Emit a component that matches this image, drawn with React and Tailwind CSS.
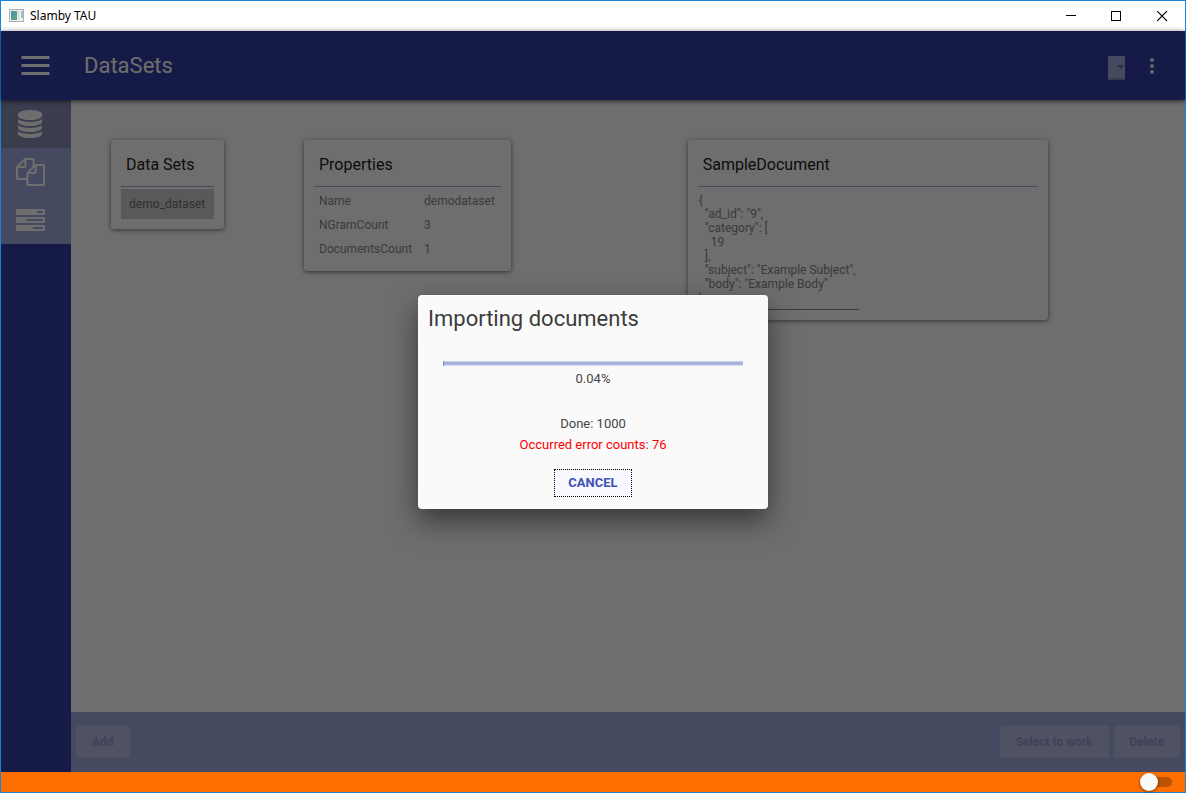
import React from "react";

const NAV = [
  {
    label: "DataSets",
    active: true,
    box: "0 0 1536 1792",
    size: "ml-[2px] w-[24px]",
    d: "M768 768q237 0 443-43t325-127v170q0 69-103 128t-280 93.5-385 34.5-385-34.5-280-93.5-103-128v-170q119 84 325 127t443 43zm0 768q237 0 443-43t325-127v170q0 69-103 128t-280 93.5-385 34.5-385-34.5-280-93.5-103-128v-170q119 84 325 127t443 43zm0-384q237 0 443-43t325-127v170q0 69-103 128t-280 93.5-385 34.5-385-34.5-280-93.5-103-128v-170q119 84 325 127t443 43zm0-1152q208 0 385 34.5t280 93.5 103 128v128q0 69-103 128t-280 93.5-385 34.5-385-34.5-280-93.5-103-128v-128q0-69 103-128t280-93.5 385-34.5z",
  },
  {
    label: "Documents",
    box: "0 0 1792 1792",
    size: "w-[29px]",
    d: "M1696 384q40 0 68 28t28 68v1216q0 40-28 68t-68 28h-960q-40 0-68-28t-28-68v-288h-544q-40 0-68-28t-28-68v-672q0-40 20-88t48-76l408-408q28-28 76-48t88-20h416q40 0 68 28t28 68v328q68-40 128-40h416zm-544 213l-299 299h299v-299zm-640-384l-299 299h299v-299zm196 647l316-316v-416h-384v416q0 40-28 68t-68 28h-416v640h512v-256q0-40 20-88t48-76zm956 804v-1152h-384v416q0 40-28 68t-68 28h-416v640h896z",
  },
  {
    label: "Processes",
    box: "0 -64 1792 1792",
    size: "w-[29px]",
    d: "M1024 1408h640v-128h-640v128zm-384-512h1024v-128h-1024v128zm640-512h384v-128h-384v128zm512 832v256q0 26-19 45t-45 19h-1664q-26 0-45-19t-19-45v-256q0-26 19-45t45-19h1664q26 0 45 19t19 45zm0-512v256q0 26-19 45t-45 19h-1664q-26 0-45-19t-19-45v-256q0-26 19-45t45-19h1664q26 0 45 19t19 45zm0-512v256q0 26-19 45t-45 19h-1664q-26 0-45-19t-19-45v-256q0-26 19-45t45-19h1664q26 0 45 19t19 45z",
  },
];

const PROPERTIES = [
  ["Name", "demodataset"],
  ["NGramCount", "3"],
  ["DocumentsCount", "1"],
];

const SAMPLE = `{
  "ad_id": "9",
  "category": [
    19
  ],
  "subject": "Example Subject",
  "body": "Example Body"
}`;

function TitleBar() {
  return (
    <div className="flex h-[30px] shrink-0 items-center bg-white pl-2">
      <svg className="mb-[2px] h-[13px] w-[15px]" viewBox="0 0 15 13" aria-hidden="true">
        <defs>
          <linearGradient id="pane" x1="0" y1="0" x2="1" y2="1">
            <stop offset="0" stopColor="#4f86b5" />
            <stop offset="1" stopColor="#5fae7c" />
          </linearGradient>
        </defs>
        <rect x="0.5" y="0.5" width="14" height="12" fill="#f2f2f2" stroke="#a9adb1" />
        <rect x="2" y="2" width="6" height="9" fill="url(#pane)" />
        <rect x="8" y="2" width="3" height="9" fill="#dfe4e8" />
        <rect x="12" y="2" width="2" height="7" fill="#9cc5c4" />
      </svg>
      <span className="ml-[6px] flex-1 font-['Noto_Sans',sans-serif] text-[12px] text-black">Slamby TAU</span>
      <button aria-label="Minimize" className="flex h-full w-[46px] items-center justify-center">
        <svg className="size-[11px]" viewBox="0 0 11 11"><path d="M0 4.500h10" stroke="#000" /></svg>
      </button>
      <button aria-label="Maximize" className="flex h-full w-[45px] items-center justify-center">
        <svg className="size-[11px]" viewBox="0 0 11 11"><rect x="0.5" y="0.5" width="9" height="9" fill="none" stroke="#000" /></svg>
      </button>
      <button aria-label="Close" className="flex h-full w-[46px] items-center justify-center">
        <svg className="size-[11px]" viewBox="0 0 11 11"><path d="M0 0l10 10M10 0l-10 10" stroke="#000" strokeWidth="1.1" /></svg>
      </button>
    </div>
  );
}

function Header() {
  return (
    <header className="z-10 flex h-[69px] shrink-0 items-center bg-[#303f9f] pl-5 pr-7 text-[#fafafa] shadow-[0_1px_5px_rgba(0,0,0,0.7)]">
      <button aria-label="Menu">
        <svg className="h-[19px] w-[29px]" viewBox="0 0 29 19" fill="currentColor">
          <path d="M0.500 0h28v3h-28zM0.500 8h28v3h-28zM0.500 16h28v3h-28z" />
        </svg>
      </button>
      <h1 className="ml-[34px] flex-1 text-[22px]">DataSets</h1>
      <div className="relative mt-1 flex">
        <select aria-label="Selected dataset" className="h-6 w-[17px] appearance-none border-b-2 border-[#8088b2] bg-[#9fa8da]" />
        <svg className="pointer-events-none absolute right-0 top-[9px] h-[4px] w-2" viewBox="0 0 8 4"><path d="M0 0h7l-3.500 4z" fill="#6b7194" /></svg>
      </div>
      <button aria-label="More" className="ml-6">
        <svg className="h-4 w-2" viewBox="0 0 8 16" fill="#e4e4e4">
          <circle cx="3" cy="2" r="2" /><circle cx="3" cy="8" r="2" /><circle cx="3" cy="14" r="2" />
        </svg>
      </button>
    </header>
  );
}

function Card({ title, className = "", children }) {
  return (
    <section className={`rounded-[3px] bg-[#fafafa] px-[10px] pb-[10px] shadow-[0_1px_5px_rgba(0,0,0,0.55)] ${className}`}>
      <h2 className="h-[47px] border-b border-[#9fa8da] pl-[5px] text-[16px] leading-[50px] text-[#1c1c1c]">{title}</h2>
      {children}
    </section>
  );
}

function FootButton({ children }) {
  return (
    <button disabled className="h-8 rounded-[3px] bg-[#b5bae2] px-4 text-[12px] font-bold text-[#8f96cc]">
      {children}
    </button>
  );
}

function ImportDialog() {
  return (
    <div className="absolute inset-0 z-20 flex items-center justify-center bg-black/56">
      <div
        role="dialog"
        aria-labelledby="import-title"
        className="flex w-[350px] flex-col items-center rounded-[4px] bg-[#fafafa] pb-3 text-[13px] leading-[21px] text-[#454545] shadow-[0_12px_28px_rgba(0,0,0,0.5)]"
      >
        <h2 id="import-title" className="w-full px-[10px] pt-2 text-[22px] leading-8 text-[#3c3c3c]">Importing documents</h2>
        <progress
          aria-label="Import progress"
          value="0.04"
          max="100"
          className="mt-[26px] block h-[5px] w-[300px] appearance-none [&::-webkit-progress-bar]:bg-[linear-gradient(#c5cae9_1px,#b3bae2_1px_2px,#9fa8da_2px_3px,#b3bae2_3px_4px,#d5d8ef_4px)] [&::-webkit-progress-value]:bg-[#7f8acb]"
        />
        <p className="mt-[2px]">0.04%</p>
        <p className="mt-6">Done: 1000</p>
        <p className="text-[#ff0000]">Occurred error counts: 76</p>
        <button className="mt-[14px] h-7 border border-dotted border-black bg-[#f8f9ff] px-[13px] text-[13px] font-bold text-[#3f51b5]">
          CANCEL
        </button>
      </div>
    </div>
  );
}

export default function App() {
  return (
    <div className="flex h-screen flex-col border border-[#1883d7] font-[Roboto,sans-serif]">
      <TitleBar />
      <div className="relative flex min-h-0 flex-1 flex-col">
        <Header />
        <div className="flex min-h-0 flex-1">
          <nav className="w-[70px] shrink-0 bg-[#303f9f]">
            {NAV.map((item) => (
              <a
                key={item.label}
                href="#"
                aria-label={item.label}
                className={`flex h-12 items-center pl-[15px] text-[#fafafa] ${item.active ? "bg-[#868cb4]" : "bg-[#9fa8da]"}`}
              >
                <svg className={`h-7 ${item.size}`} viewBox={item.box} preserveAspectRatio="none" fill="currentColor"><path d={item.d} /></svg>
              </a>
            ))}
          </nav>
          <div className="flex min-w-0 flex-1 flex-col">
            <main className="grid flex-1 grid-cols-[auto_5fr_7fr] items-start bg-[#fafafa] text-[12px] text-[#8a8a8a]">
              <Card title="Data Sets" className="m-10 min-w-[113px]">
                <ul className="pt-[2px]">
                  <li className="bg-[#cbcbcb] px-2 text-[12px] leading-[30px] text-[#6e6e6e]">demo_dataset</li>
                </ul>
              </Card>
              <Card title="Properties" className="m-10 justify-self-start">
                <table className="mt-[2px] text-left text-[#858585]">
                  <tbody>
                    {PROPERTIES.map(([name, value]) => (
                      <tr key={name} className="h-6">
                        <th scope="row" className="pl-[5px] pr-3 font-normal">{name}</th>
                        <td className="pr-[6px]">{value}</td>
                      </tr>
                    ))}
                  </tbody>
                </table>
              </Card>
              <Card title="SampleDocument" className="m-10 w-[360px]">
                <pre className="mt-[6px] w-[161px] border-b border-[#8a8a8a] pb-1 pl-px font-[Roboto,sans-serif] leading-[14px] text-[#858585]">{SAMPLE}</pre>
              </Card>
            </main>
            <footer className="flex h-[60px] shrink-0 items-center gap-[5px] bg-[#9fa8da] px-[5px]">
              <FootButton>Add</FootButton>
              <span className="flex-1" />
              <FootButton>Select to work</FootButton>
              <FootButton>Delete</FootButton>
            </footer>
          </div>
        </div>
        <ImportDialog />
      </div>
      <div className="flex h-5 shrink-0 items-center justify-end bg-[#ff6f00] pr-[13px]">
        <label className="relative flex h-[18px] w-8 items-center">
          <input type="checkbox" aria-label="Toggle log" className="peer absolute inset-0 appearance-none" />
          <span className="pointer-events-none ml-2 h-[10px] w-6 rounded-full bg-[#bd5200]" />
          <span className="pointer-events-none absolute left-0 size-[18px] rounded-full bg-[#fafafa] shadow-[0_1px_3px_rgba(0,0,0,0.5)]" />
        </label>
      </div>
    </div>
  );
}
